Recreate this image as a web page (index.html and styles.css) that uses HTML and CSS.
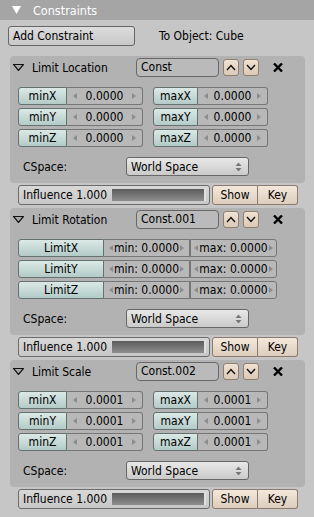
FILE: index.html
```html
<!DOCTYPE html>
<html lang="en">
<head>
    <meta charset="utf-8">
    <title>Constraints</title>
    <link rel="stylesheet" href="styles.css">
</head>
<body>

<div id="contents">

    <div class="titleBar">
        <svg class="titleArrow" width="9" height="8" viewBox="0 0 9 8"><polygon points="0,0 9,0 4.5,8" fill="#ffffff"/></svg>
        <span>Constraints</span>
    </div>

    <div class="topRow">
        <div class="button addButton">Add Constraint</div>
        <div class="target">To Object: Cube</div>
    </div>

    <!-- Limit Location -->
    <div class="panel">
        <div class="panelHead">
            <svg class="openArrow" width="11" height="7" viewBox="0 0 11 7"><polygon points="0.5,0.5 10.5,0.5 5.5,6.5" fill="#a8a8a8" stroke="#111" stroke-width="1.2"/></svg>
            <span class="panelName">Limit Location</span>
            <div class="nameField">Const</div>
            <div class="moveBtn"><svg width="10" height="7" viewBox="0 0 10 7"><polyline points="1,6 5,1.5 9,6" fill="none" stroke="#111" stroke-width="1.4"/></svg></div>
            <div class="moveBtn"><svg width="10" height="7" viewBox="0 0 10 7"><polyline points="1,1 5,5.5 9,1" fill="none" stroke="#111" stroke-width="1.4"/></svg></div>
            <svg class="closeX" width="10" height="9" viewBox="0 0 10 9"><path d="M1,0.5 L9,8.5 M9,0.5 L1,8.5" stroke="#000" stroke-width="2.4"/></svg>
        </div>
        <div class="valueRows">
            <div class="valueRow">
                <div class="pair"><div class="toggle minT">minX</div><div class="numField minF"><i class="al"></i>0.0000<i class="ar"></i></div></div>
                <div class="pair"><div class="toggle maxT">maxX</div><div class="numField maxF"><i class="al"></i>0.0000<i class="ar"></i></div></div>
            </div>
            <div class="valueRow">
                <div class="pair"><div class="toggle minT">minY</div><div class="numField minF"><i class="al"></i>0.0000<i class="ar"></i></div></div>
                <div class="pair"><div class="toggle maxT">maxY</div><div class="numField maxF"><i class="al"></i>0.0000<i class="ar"></i></div></div>
            </div>
            <div class="valueRow">
                <div class="pair"><div class="toggle minT">minZ</div><div class="numField minF"><i class="al"></i>0.0000<i class="ar"></i></div></div>
                <div class="pair"><div class="toggle maxT">maxZ</div><div class="numField maxF"><i class="al"></i>0.0000<i class="ar"></i></div></div>
            </div>
        </div>
        <div class="cspaceRow">
            <span class="cspaceLabel">CSpace:</span>
            <div class="dropdown">World Space<svg width="7" height="10" viewBox="0 0 7 10"><polygon points="0.5,4 3.5,0.5 6.5,4" fill="#777"/><polygon points="0.5,6 3.5,9.5 6.5,6" fill="#777"/></svg></div>
        </div>
    </div>
    <div class="influenceRow">
        <div class="slider"><span>Influence 1.000</span><div class="sliderBar"></div></div>
        <div class="button tanBtn showBtn">Show</div>
        <div class="button tanBtn keyBtn">Key</div>
    </div>

    <!-- Limit Rotation -->
    <div class="panel">
        <div class="panelHead">
            <svg class="openArrow" width="11" height="7" viewBox="0 0 11 7"><polygon points="0.5,0.5 10.5,0.5 5.5,6.5" fill="#a8a8a8" stroke="#111" stroke-width="1.2"/></svg>
            <span class="panelName">Limit Rotation</span>
            <div class="nameField">Const.001</div>
            <div class="moveBtn"><svg width="10" height="7" viewBox="0 0 10 7"><polyline points="1,6 5,1.5 9,6" fill="none" stroke="#111" stroke-width="1.4"/></svg></div>
            <div class="moveBtn"><svg width="10" height="7" viewBox="0 0 10 7"><polyline points="1,1 5,5.5 9,1" fill="none" stroke="#111" stroke-width="1.4"/></svg></div>
            <svg class="closeX" width="10" height="9" viewBox="0 0 10 9"><path d="M1,0.5 L9,8.5 M9,0.5 L1,8.5" stroke="#000" stroke-width="2.4"/></svg>
        </div>
        <div class="valueRows">
            <div class="limitRow"><div class="toggle limitT">LimitX</div><div class="numField tight"><i class="al"></i>min: 0.0000<i class="ar"></i></div><div class="numField tight last"><i class="al"></i>max: 0.0000<i class="ar"></i></div></div>
            <div class="limitRow"><div class="toggle limitT">LimitY</div><div class="numField tight"><i class="al"></i>min: 0.0000<i class="ar"></i></div><div class="numField tight last"><i class="al"></i>max: 0.0000<i class="ar"></i></div></div>
            <div class="limitRow"><div class="toggle limitT">LimitZ</div><div class="numField tight"><i class="al"></i>min: 0.0000<i class="ar"></i></div><div class="numField tight last"><i class="al"></i>max: 0.0000<i class="ar"></i></div></div>
        </div>
        <div class="cspaceRow">
            <span class="cspaceLabel">CSpace:</span>
            <div class="dropdown">World Space<svg width="7" height="10" viewBox="0 0 7 10"><polygon points="0.5,4 3.5,0.5 6.5,4" fill="#777"/><polygon points="0.5,6 3.5,9.5 6.5,6" fill="#777"/></svg></div>
        </div>
    </div>
    <div class="influenceRow">
        <div class="slider"><span>Influence 1.000</span><div class="sliderBar"></div></div>
        <div class="button tanBtn showBtn">Show</div>
        <div class="button tanBtn keyBtn">Key</div>
    </div>

    <!-- Limit Scale -->
    <div class="panel">
        <div class="panelHead">
            <svg class="openArrow" width="11" height="7" viewBox="0 0 11 7"><polygon points="0.5,0.5 10.5,0.5 5.5,6.5" fill="#a8a8a8" stroke="#111" stroke-width="1.2"/></svg>
            <span class="panelName">Limit Scale</span>
            <div class="nameField">Const.002</div>
            <div class="moveBtn"><svg width="10" height="7" viewBox="0 0 10 7"><polyline points="1,6 5,1.5 9,6" fill="none" stroke="#111" stroke-width="1.4"/></svg></div>
            <div class="moveBtn"><svg width="10" height="7" viewBox="0 0 10 7"><polyline points="1,1 5,5.5 9,1" fill="none" stroke="#111" stroke-width="1.4"/></svg></div>
            <svg class="closeX" width="10" height="9" viewBox="0 0 10 9"><path d="M1,0.5 L9,8.5 M9,0.5 L1,8.5" stroke="#000" stroke-width="2.4"/></svg>
        </div>
        <div class="valueRows">
            <div class="valueRow">
                <div class="pair"><div class="toggle minT">minX</div><div class="numField minF"><i class="al"></i>0.0001<i class="ar"></i></div></div>
                <div class="pair"><div class="toggle maxT">maxX</div><div class="numField maxF"><i class="al"></i>0.0001<i class="ar"></i></div></div>
            </div>
            <div class="valueRow">
                <div class="pair"><div class="toggle minT">minY</div><div class="numField minF"><i class="al"></i>0.0001<i class="ar"></i></div></div>
                <div class="pair"><div class="toggle maxT">maxY</div><div class="numField maxF"><i class="al"></i>0.0001<i class="ar"></i></div></div>
            </div>
            <div class="valueRow">
                <div class="pair"><div class="toggle minT">minZ</div><div class="numField minF"><i class="al"></i>0.0001<i class="ar"></i></div></div>
                <div class="pair"><div class="toggle maxT">maxZ</div><div class="numField maxF"><i class="al"></i>0.0001<i class="ar"></i></div></div>
            </div>
        </div>
        <div class="cspaceRow">
            <span class="cspaceLabel">CSpace:</span>
            <div class="dropdown">World Space<svg width="7" height="10" viewBox="0 0 7 10"><polygon points="0.5,4 3.5,0.5 6.5,4" fill="#777"/><polygon points="0.5,6 3.5,9.5 6.5,6" fill="#777"/></svg></div>
        </div>
    </div>
    <div class="influenceRow">
        <div class="slider"><span>Influence 1.000</span><div class="sliderBar"></div></div>
        <div class="button tanBtn showBtn">Show</div>
        <div class="button tanBtn keyBtn">Key</div>
    </div>

</div>

</body>
</html>
```

FILE: styles.css
```css
body
{
    margin:           0px;
    background-color: #c6c6c6;
    font-family:      "DejaVu Sans Condensed", "DejaVu Sans", sans-serif;
    font-stretch:     condensed;
    font-size:        12px;
    color:            #000000;
}

#contents
{
    width:            314px;
    height:           517px;
    overflow:         hidden;
}

.titleBar
{
    display:          flex;
    align-items:      center;
    height:           20px;
    padding-left:     12px;
    background-color: #a5a5a5;
    color:            #ffffff;
    font-size:        12.5px;
}

.titleArrow
{
    margin-right:     12px;
}

.topRow
{
    display:          flex;
    align-items:      center;
    padding:          6px 0px 0px 8px;
    height:           20px;
}

.button
{
    display:          flex;
    align-items:      center;
    justify-content:  center;
    box-sizing:       border-box;
    border:           1px solid #666666;
    border-radius:    3px;
    cursor:           pointer;
    user-select:      none;
}

.addButton
{
    width:            127px;
    height:           20px;
    justify-content:  flex-start;
    padding-left:     4px;
    background:       linear-gradient(#dcdcdc, #c8c8c8);
}

.target
{
    margin-left:      24px;
}

/* one constraint block */
.panel
{
    box-sizing:       border-box;
    width:            295px;
    height:           127px;
    margin:           10px 0px 0px 10px;
    padding-top:      2px;
    background-color: #b2b2b2;
    border-radius:    4px;
}

.panel + .influenceRow
{
    margin-top:       2px;
}

.influenceRow + .panel
{
    margin-top:       3px;
}

.panelHead
{
    display:          flex;
    align-items:      center;
    height:           19px;
    padding-left:     3px;
}

.openArrow
{
    margin-right:     8px;
}

.panelName
{
    width:            104px;
}

.nameField
{
    box-sizing:       border-box;
    width:            83px;
    height:           19px;
    padding-left:     4px;
    line-height:      17px;
    border:           1px solid #676767;
    border-radius:    4px;
    background-color: #bababa;
}

.moveBtn
{
    display:          flex;
    align-items:      center;
    justify-content:  center;
    box-sizing:       border-box;
    width:            16px;
    height:           17px;
    margin-left:      4px;
    border:           1px solid #8e7f70;
    border-radius:    3px;
    background:       linear-gradient(#efe1d2, #dccab8);
}

.moveBtn:first-of-type
{
    margin-left:      10px;
}

.closeX
{
    margin-left:      14px;
}

.valueRows
{
    display:          flex;
    flex-direction:   column;
    gap:              3px;
    margin:           10px 0px 0px 8px;
}

.valueRow
{
    display:          flex;
    gap:              10px;
    height:           18px;
}

.pair
{
    display:          flex;
}

.toggle
{
    display:          flex;
    align-items:      center;
    justify-content:  center;
    box-sizing:       border-box;
    height:           18px;
    border:           1px solid #65716f;
    border-radius:    3px 0px 0px 3px;
    background:       linear-gradient(#dbe9e6, #b3cbc7);
}

.minT   { width: 49px; }
.maxT   { width: 45px; }
.limitT { width: 86px; }

.numField
{
    display:          flex;
    align-items:      center;
    justify-content:  space-between;
    box-sizing:       border-box;
    height:           18px;
    padding:          0px 6px;
    border:           1px solid #767676;
    border-left:      none;
    border-radius:    0px 3px 3px 0px;
    background-color: #b8b8b8;
}

.minF { width: 76px; }
.maxF { width: 70px; }

.numField i
{
    display:          block;
    width:            0px;
    height:           0px;
    border-top:       3.5px solid transparent;
    border-bottom:    3.5px solid transparent;
}

.numField .al
{
    border-right:     4px solid #8c8c8c;
}

.numField .ar
{
    border-left:      4px solid #8c8c8c;
}

.limitRow
{
    display:          flex;
    height:           18px;
}

.numField.tight
{
    width:            86px;
    justify-content:  center;
    gap:              1px;
    padding:          0px;
    border-radius:    0px;
}

.numField.tight.last
{
    width:            87px;
    border-left:      1px solid #767676;
    border-radius:    0px 3px 3px 0px;
}

.cspaceRow
{
    display:          flex;
    align-items:      center;
    margin:           10px 0px 0px 13px;
    height:           19px;
}

.cspaceLabel
{
    width:            103px;
}

.dropdown
{
    display:          flex;
    align-items:      center;
    justify-content:  space-between;
    box-sizing:       border-box;
    width:            123px;
    height:           19px;
    padding:          0px 6px 0px 4px;
    border:           1px solid #676767;
    border-radius:    3px;
    background:       linear-gradient(#e8e8e8, #cacaca);
}

.influenceRow
{
    display:          flex;
    height:           20px;
    margin-left:      18px;
}

.slider
{
    display:          flex;
    align-items:      center;
    box-sizing:       border-box;
    width:            192px;
    height:           20px;
    padding:          0px 3px 0px 4px;
    border:           1px solid #6c6c6c;
    border-radius:    3px;
    background:       linear-gradient(#d8d8d8, #c8c8c8);
}

.sliderBar
{
    flex:             1;
    height:           12px;
    margin-left:      5px;
    border-right:     2px solid #e0e0e0;
    background:       linear-gradient(#5c5c5c, #8e8e8e);
}

.tanBtn
{
    height:           20px;
    border-color:     #8a7b6e;
    background:       linear-gradient(#f3e8dc, #ddcdbd);
}

.showBtn
{
    width:            46px;
    margin-left:      2px;
    border-radius:    3px 0px 0px 3px;
}

.keyBtn
{
    width:            40px;
    border-left:      none;
    border-radius:    0px 3px 3px 0px;
}
```
